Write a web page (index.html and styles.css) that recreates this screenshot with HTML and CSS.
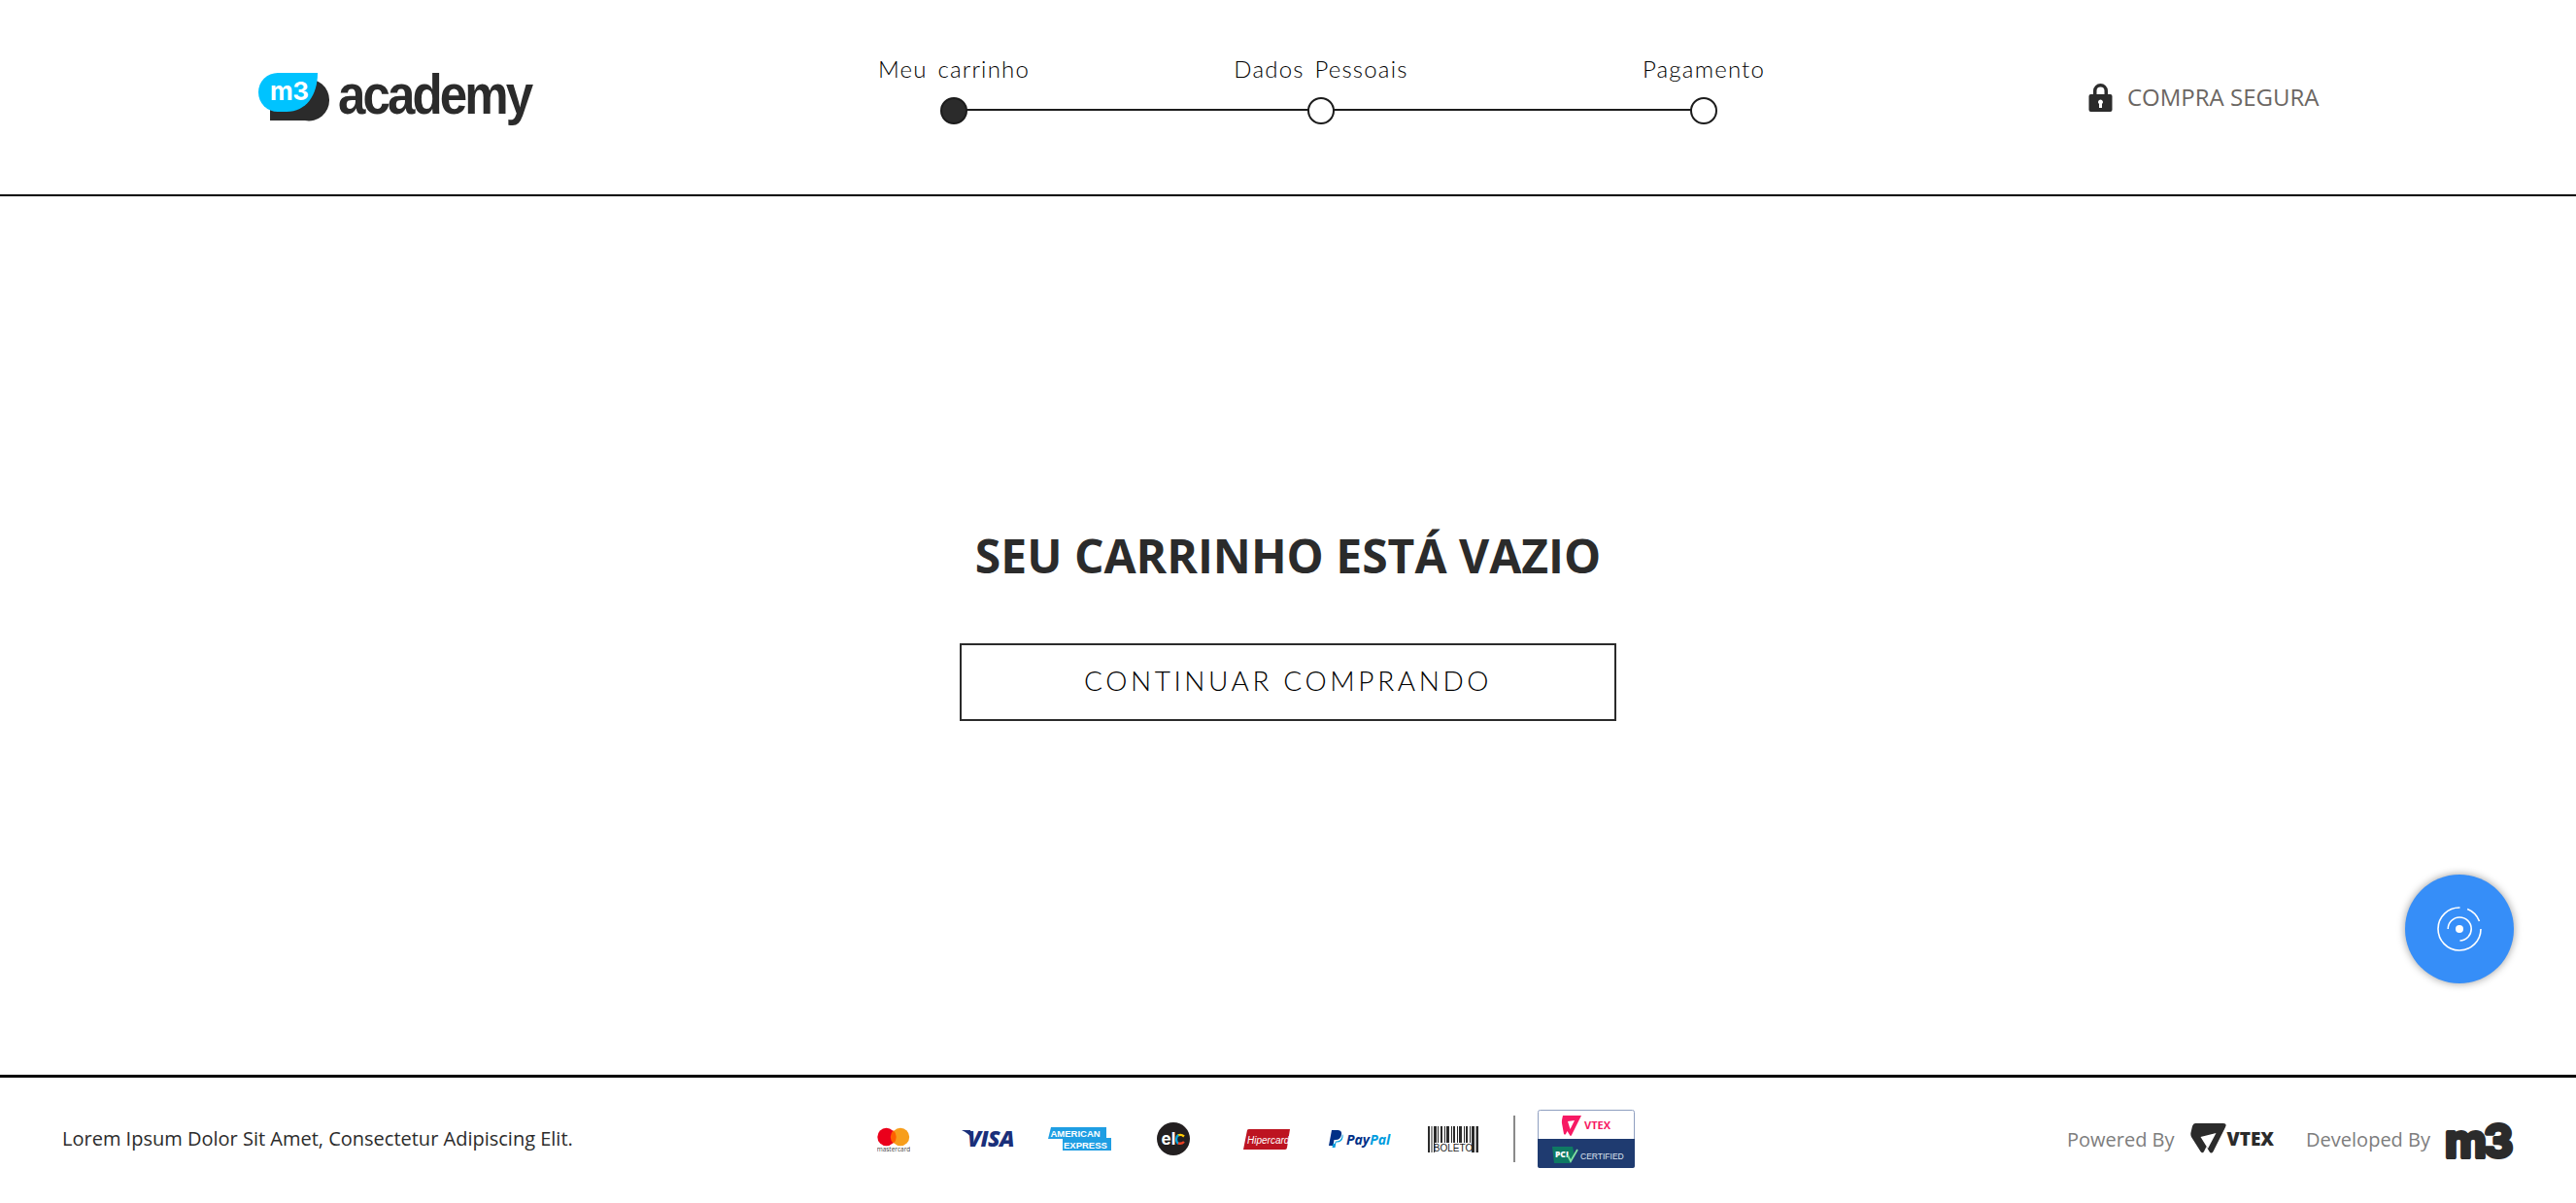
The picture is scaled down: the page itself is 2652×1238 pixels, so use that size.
FILE: index.html
```html
<!DOCTYPE html>
<html lang="pt-BR">
<head>
<meta charset="utf-8">
<title>Carrinho</title>
<link rel="stylesheet" href="styles.css">
</head>
<body>
<div class="page">
  <header class="top">
    <div class="logo">
      <svg class="logo-mark" viewBox="0 0 76 52" width="76" height="52">
        <path fill="#2b2b2b" d="M13 8H49A21 21 0 0 1 74 29A21 21 0 0 1 49 50H13Z"/>
        <path fill="#00c3ff" d="M21 1H62C62 24 50 41 30 41H21A20 20 0 0 1 21 1Z"/>
        <text class="logo-m3" x="13" y="29">m3</text>
      </svg>
      <span class="logo-word">academy</span>
    </div>
    <div class="steps">
      <div class="step"><span class="step-label">Meu carrinho</span><span class="dot dot-on"></span></div>
      <div class="step"><span class="step-label">Dados Pessoais</span><span class="dot"></span></div>
      <div class="step"><span class="step-label">Pagamento</span><span class="dot"></span></div>
    </div>
    <div class="secure">
      <svg class="lock" viewBox="0 0 25 30" width="25" height="30">
        <path fill="#2b2b2b" fill-rule="evenodd" d="M5 12V8.500A7.500 7.500 0 0 1 20 8.500V12H22.500Q24.500 12 24.500 14V28Q24.500 30 22.500 30H2.500Q.5 30 .5 28V14Q.5 12 2.500 12ZM8.500 12H16.500V8.500A4 4 0 0 0 8.500 8.500ZM12.500 17.500A2.500 2.500 0 0 0 11 22V26H14V22A2.500 2.500 0 0 0 12.500 17.500Z"/>
      </svg>
      <span class="secure-text">COMPRA SEGURA</span>
    </div>
  </header>

  <main class="content">
    <h1 class="title">SEU CARRINHO ESTÁ VAZIO</h1>
    <a class="continue" href="#">CONTINUAR COMPRANDO</a>
  </main>

  <footer class="bottom">
    <p class="lorem">Lorem Ipsum Dolor Sit Amet, Consectetur Adipiscing Elit.</p>
    <div class="pay">
      <span class="slot">
        <svg viewBox="0 0 34 30" width="34" height="30">
          <circle cx="9.500" cy="13" r="9.200" fill="#eb001b"/>
          <circle cx="24" cy="13" r="9.200" fill="#f79e1b"/>
          <path fill="#ff5f00" d="M16.750 6.200A9.200 9.200 0 0 1 16.750 19.800A9.200 9.200 0 0 1 16.750 6.200Z"/>
          <text class="t-mc" x="17" y="28">mastercard</text>
        </svg>
      </span>
      <span class="slot">
        <svg viewBox="0 0 76 40" width="76" height="40">
          <path fill="#1a2f7a" d="M12 11H21L24 21Q19 14 12 11Z"/>
          <text class="t-visa" x="18" y="28">VISA</text>
        </svg>
      </span>
      <span class="slot">
        <svg viewBox="0 0 66 24" width="66" height="24">
          <path fill="#1f9ee3" d="M3 0H60V11H65V24H15V12H0Z"/>
          <text class="t-amex" x="2.500" y="10">AMERICAN</text>
          <text class="t-amex" x="16" y="22">EXPRESS</text>
        </svg>
      </span>
      <span class="slot">
        <svg viewBox="0 0 34 34" width="34" height="34">
          <circle cx="17" cy="17" r="17" fill="#231f20"/>
          <text class="t-elo" x="4.500" y="22.500">el</text>
          <path fill="none" stroke="#ffcb05" stroke-width="2.400" d="M21.500 13.500A6 6 0 0 1 28 14.500"/>
          <path fill="none" stroke="#00a4e0" stroke-width="2.400" d="M22 13A6 6 0 0 0 22 22"/>
          <path fill="none" stroke="#ef4123" stroke-width="2.400" d="M22 21.500A6 6 0 0 0 28 20"/>
        </svg>
      </span>
      <span class="slot">
        <svg viewBox="0 0 48 21" width="48" height="21">
          <path fill="#bd1421" d="M4 1Q4.500 0 6 0H48L45 19Q44.800 21 43 21H0Z"/>
          <text class="t-hiper" x="4" y="14.500">Hipercard</text>
        </svg>
      </span>
      <span class="slot">
        <svg viewBox="0 0 64 18" width="64" height="18">
          <path fill="#003087" d="M3 0H9.500Q14 .5 13 5Q12 10 7 10H5.500L4.500 16H0Z"/>
          <path fill="#009cde" d="M14 4Q15 5 14.500 7.500Q13.500 12.500 8.500 12.500H7.500L6.500 18H3.500L4.200 14H6L7 11.500H8Q12.500 11 13.500 7Z"/>
          <text class="t-pay" x="18" y="14.500">Pay<tspan class="t-pal">Pal</tspan></text>
        </svg>
      </span>
      <span class="slot">
        <svg viewBox="0 0 52 27" width="52" height="27">
          <g fill="#2a2a2a">
            <rect x="0" y="0" width="2" height="27"/><rect x="3.500" y="0" width="1" height="27"/><rect x="6" y="0" width="3" height="27"/><rect x="10" y="0" width="1" height="27"/><rect x="13" y="0" width="2" height="27"/><rect x="17" y="0" width="1" height="27"/><rect x="19" y="0" width="3" height="27"/><rect x="24" y="0" width="1" height="27"/><rect x="26" y="0" width="2" height="27"/><rect x="30" y="0" width="1" height="27"/><rect x="32" y="0" width="3" height="27"/><rect x="37" y="0" width="1" height="27"/><rect x="39" y="0" width="2" height="27"/><rect x="43" y="0" width="1" height="27"/><rect x="45" y="0" width="3" height="27"/><rect x="49.500" y="0" width="2.500" height="27"/>
          </g>
          <rect x="7" y="17" width="38" height="10" fill="#fff"/>
          <text class="t-bol" x="26" y="26">BOLETO</text>
        </svg>
      </span>
      <span class="pay-rule"></span>
      <svg class="badge" viewBox="0 0 100 60" width="100" height="60">
        <rect x=".5" y=".5" width="99" height="59" rx="2" fill="#fff" stroke="#8f9fc0"/>
        <path fill="#1f3b70" d="M0 30H100V58Q100 60 98 60H2Q0 60 0 58Z"/>
        <path fill="#f71963" fill-rule="evenodd" d="M26 6H45L35 26Q34 28 33 26L30.500 22L29 25Q28 26 27 25L25 14Q24.500 12 26 6ZM31 12L38 11L33.500 20Z"/>
        <text class="t-vtex-pink" x="48" y="20">VTEX</text>
        <path fill="#0f7a63" d="M15 38H36L38 47L33 55H17Z"/>
        <text class="t-pci" x="18" y="49">PCI</text>
        <path fill="none" stroke="#7fe0a0" stroke-width="1.800" d="M31 47L34 53L41 41"/>
        <text class="t-cert" x="44" y="50.500">CERTIFIED</text>
      </svg>
    </div>
    <div class="credits">
      <span class="credit-text">Powered By</span>
      <span class="vtex">
        <svg viewBox="0 0 37 32" width="37" height="32">
          <path fill="#2b2b2b" fill-rule="evenodd" d="M5 0H34Q38 0 36 4L23.500 29Q21.500 32 19.500 29L16.500 24L14 29Q12.500 31.500 10.500 29L1 14Q0 12 .5 9.500L2 3Q3 0 5 0ZM10.500 14L26.500 10L18 26Z"/>
        </svg>
        <span class="vtex-word">VTEX</span>
      </span>
      <span class="credit-text credit-dev">Developed By</span>
      <svg class="m3" viewBox="0 0 78 46" width="78" height="46">
        <text class="t-m3" x="7" y="42">m3</text>
      </svg>
    </div>
  </footer>

  <button class="fab" type="button" aria-label="Ajuda">
    <svg viewBox="0 0 48 48" width="48" height="48">
      <g fill="none" stroke="#fff" stroke-width="1.600">
        <path d="M24.500 2A22 22 0 1 0 46 24"/>
        <path d="M32.200 3.500A22 22 0 0 1 44.500 16"/>
        <path d="M12.200 24A12 12 0 1 1 24.500 36"/>
      </g>
      <circle cx="24" cy="24" r="4" fill="#fff"/>
    </svg>
  </button>
</div>
</body>
</html>
```
FILE: styles.css
```css
* { box-sizing: border-box; }
html, body { margin: 0; padding: 0; background: #fff; }
.page {
  position: relative;
  display: flex;
  flex-direction: column;
  width: 2652px;
  height: 1238px;
  overflow: hidden;
  color: #2b2b2b;
  font-family: "Open Sans", sans-serif;
}

/* header */
.top {
  display: flex;
  align-items: flex-start;
  height: 202px;
  flex: none;
  padding: 57px 0 0 265px;
  border-bottom: 2px solid #000;
}
.logo {
  display: flex;
  align-items: flex-start;
  width: 283px;
  margin: 17px 334px 0 0;
}
.logo-mark { flex: none; }
.logo-m3 { font: 700 26px "Inter", sans-serif; fill: #fff; letter-spacing: -.5px; }
.logo-word {
  margin: -12px 0 0 7px;
  font: 700 58px/70px "Liberation Sans", sans-serif;
  letter-spacing: -3.300px;
  color: #2b2b2b;
  transform: scaleX(.88);
  transform-origin: left center;
}

.steps {
  position: relative;
  display: grid;
  grid-template-columns: 200px 556px 232px;
  flex: none;
}
.steps::before {
  content: "";
  position: absolute;
  left: 100px;
  top: 55px;
  width: 772px;
  height: 2px;
  background: #1c1c1c;
}
.step { display: flex; flex-direction: column; align-items: center; gap: 15px; }
.step-label {
  font: 300 24px/28px "Lato", sans-serif;
  color: #000;
  white-space: nowrap;
  word-spacing: 3px;
  letter-spacing: 1.200px;
}
.dot {
  position: relative;
  width: 28px;
  height: 28px;
  border: 2px solid #1c1c1c;
  border-radius: 50%;
  background: #fff;
}
.dot-on { background: #2b2b2b; }

.secure {
  display: flex;
  align-items: center;
  gap: 15px;
  margin: 27px 0 0 280px;
}
.lock { flex: none; }
.secure-text { font-size: 24px; line-height: 32px; color: #6b6662; white-space: nowrap; }

/* main */
.content {
  flex: 1;
  display: flex;
  flex-direction: column;
  align-items: center;
  padding-top: 342px;
}
.title {
  margin: 0 0 62px;
  font-size: 48px;
  line-height: 56px;
  font-weight: 700;
  color: #2b2b2b;
}
.continue {
  display: flex;
  align-items: center;
  justify-content: center;
  width: 676px;
  height: 80px;
  padding-bottom: 4px;
  border: 2px solid #2b2b2b;
  font: 300 28px "Lato", sans-serif;
  letter-spacing: 3.600px;
  color: #000;
  text-decoration: none;
}

/* footer */
.bottom {
  display: flex;
  align-items: center;
  flex: none;
  height: 132px;
  padding: 0 64px 3px;
  border-top: 3px solid #000;
}
.lorem { flex: 0 0 808px; margin: 0; font-size: 20px; line-height: 28px; color: #2b2b2b; }
.pay { display: flex; align-items: center; }
.slot { display: flex; align-items: center; justify-content: center; width: 96px; }
.pay-rule { width: 2px; height: 48px; margin: 0 23px 0 14px; background: #8a8a8a; }
.badge { flex: none; }
.t-mc { font: 400 6.500px "Open Sans", sans-serif; text-anchor: middle; fill: #444; }
.t-visa { font: italic 800 23px "Open Sans", sans-serif; fill: #1a2f7a; letter-spacing: -.6px; }
.t-amex { font: 700 9.500px "Liberation Sans", sans-serif; fill: #fff; }
.t-elo { font: 700 17px "Inter", sans-serif; fill: #fff; }
.t-hiper { font: italic 400 10px "Liberation Sans", sans-serif; fill: #fff; }
.t-pay { font: italic 700 14px "Open Sans", sans-serif; fill: #003087; }
.t-pal { fill: #009cde; }
.t-bol { font: 400 10px "Liberation Sans", sans-serif; text-anchor: middle; fill: #222; }
.t-vtex-pink { font: 700 11px "Open Sans", sans-serif; fill: #f71963; }
.t-pci { font: 800 8.500px "Open Sans", sans-serif; fill: #fff; }
.t-cert { font: 400 8.500px "Liberation Sans", sans-serif; fill: #dfe6f2; }

.credits { display: flex; align-items: center; margin-left: auto; }
.credit-text { font-size: 20px; color: #7d7d7d; white-space: nowrap; }
.credit-dev { margin-left: 33px; }
.vtex { display: flex; align-items: center; gap: 1px; margin-left: 16px; }
.vtex-word { font: 800 19px "Open Sans", sans-serif; color: #2b2b2b; }
.m3 { flex: none; margin-left: 8px; overflow: visible; }
.t-m3 {
  font: 700 47px "Inter", sans-serif;
  fill: #2b2b2b;
  stroke: #2b2b2b;
  stroke-width: 4px;
  stroke-linejoin: round;
  letter-spacing: -3px;
}

.fab {
  position: absolute;
  left: 2476px;
  top: 900px;
  display: flex;
  align-items: center;
  justify-content: center;
  width: 112px;
  height: 112px;
  padding: 0;
  border: 0;
  border-radius: 50%;
  background: #368ef8;
  box-shadow: 0 0 8px rgba(0, 0, 0, .4);
}
```
